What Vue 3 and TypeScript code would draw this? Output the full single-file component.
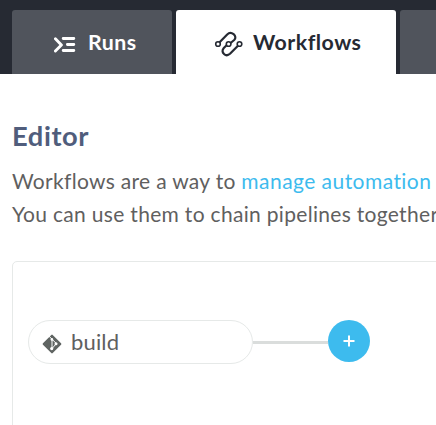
<script setup lang="ts">
interface Tab {
  label: string
  kind: 'runs' | 'workflows' | 'other'
  active: boolean
}

const tabs: Tab[] = [
  { label: 'Runs', kind: 'runs', active: false },
  { label: 'Workflows', kind: 'workflows', active: true },
  { label: '', kind: 'other', active: false },
]
const pipeline: string = 'build'
</script>

<template>
  <div class="page">
    <nav class="tabs">
      <div v-for="tab in tabs" :key="tab.kind" class="tab" :class="[tab.kind, { active: tab.active }]">
        <svg v-if="tab.kind === 'runs'" class="runs-icon" viewBox="0 0 22 16" width="22" height="16">
          <path d="M1.4 1.7 7.4 7.9 1.4 14M9.2 1.5H19.8M13.4 7.5H19.8M9.2 13.5H19.8" />
        </svg>
        <svg v-if="tab.kind === 'workflows'" class="flow-icon" viewBox="0 0 28 24" width="28" height="24">
          <path d="M4.6 10.2 12.2 2.4C14 .5 16.6.5 18.6 2.2S21 6.2 19.2 8L15.6 11M11.6 13.2 8.8 16C7 18 7.2 20.4 9 22S13.2 23.4 15 21.8L23 13.8" />
          <circle cx="3" cy="12" r="2.3" />
          <circle cx="13.6" cy="12" r="2.3" />
          <circle cx="24.5" cy="12" r="2.3" />
        </svg>
        <span>{{ tab.label }}</span>
      </div>
    </nav>
    <main class="content">
      <h1>Editor</h1>
      <p>Workflows are a way to <a>manage automation</a><br />You can use them to chain pipelines together</p>
      <section class="canvas">
        <div class="flow">
          <div class="step">
            <svg class="git-icon" viewBox="0 0 20 20" width="20" height="20">
              <rect class="diamond" x="3.1" y="3.1" width="13.8" height="13.8" rx="1" transform="rotate(45 10 10)" />
              <path class="branch" d="M7 2.2 10 5.2V15M10.4 5.6 14.2 9.4M14 10 10.4 14.2" />
              <circle cx="9.9" cy="5.4" r="1.3" />
              <circle cx="14" cy="9.7" r="1.5" />
              <circle cx="9.7" cy="14.6" r="1.6" />
            </svg>
            <span>{{ pipeline }}</span>
          </div>
          <div class="link"></div>
          <button class="add" type="button" aria-label="Add step">
            <svg viewBox="0 0 12 12" width="12" height="12"><path d="M6 .5V11.5M.5 6H11.5" /></svg>
          </button>
        </div>
      </section>
    </main>
  </div>
</template>

<style>
body {
  background: #fff;
  overflow: hidden;
}
</style>

<style scoped>
.page {
  width: 100%;
  height: 425px;
  overflow: hidden;
  font-family: Lato, "Liberation Sans", sans-serif;
  font-variant-ligatures: none;
  color: #5f6060;
}
.tabs {
  display: flex;
  gap: 4px;
  height: 74px;
  padding: 10px 0 0 12px;
  box-sizing: border-box;
  background: #262a33;
}
.tab {
  display: flex;
  flex: none;
  height: 64px;
  box-sizing: border-box;
  border-radius: 3px 3px 0 0;
  background: #50545c;
  color: #fff;
  font-size: 21.3px;
  font-weight: 700;
  letter-spacing: 0.5px;
  line-height: 64px;
}
.runs { width: 160px; padding-left: 41px; }
.workflows { width: 220px; padding-left: 39px; }
.other { width: 160px; }
.active {
  background: #fff;
  color: #262a33;
}
svg {
  display: block;
  flex: none;
  fill: none;
  stroke-linecap: round;
  stroke-linejoin: round;
}
.runs-icon {
  margin: 27px 12px 0 1px;
  stroke: #fff;
  stroke-width: 2.9;
}
.flow-icon {
  margin: 22px 10px 0 0;
  overflow: visible;
  stroke: #262a33;
  stroke-width: 2.2;
}
.flow-icon circle {
  fill: #fff;
  stroke-width: 1.6;
}
.content {
  padding: 45px 0 0 12px;
}
h1 {
  margin: 0;
  font-size: 27.3px;
  font-weight: 700;
  letter-spacing: 0.6px;
  line-height: 34px;
  color: #505d7c;
}
p {
  margin: 11px 0 0;
  font-size: 21px;
  letter-spacing: 0.31px;
  line-height: 33px;
  white-space: nowrap;
}
a {
  color: #3dbbee;
  letter-spacing: 0.45px;
}
.canvas {
  width: 600px;
  height: 300px;
  margin-top: 31px;
  padding: 58px 0 0 15px;
  box-sizing: border-box;
  border: 1px solid #e6e9e8;
  border-radius: 5px;
}
.flow {
  display: flex;
  align-items: flex-start;
}
.step {
  display: flex;
  align-items: center;
  width: 225px;
  height: 44px;
  padding-left: 13px;
  box-sizing: border-box;
  border: 1px solid #e6e9e8;
  border-radius: 22px;
  font-size: 22px;
  letter-spacing: 0.15px;
  line-height: 42px;
}
.git-icon { margin: 3px 9px 0 0; }
.diamond { fill: #5f6462; }
.branch {
  stroke: #fff;
  stroke-width: 1;
}
.git-icon circle { fill: #fff; }
.link {
  width: 75px;
  height: 3px;
  margin-top: 21px;
  background: #dadddc;
}
.add {
  display: grid;
  place-items: center;
  width: 42px;
  height: 42px;
  padding: 0;
  border: 0;
  border-radius: 50%;
  background: #3dbbee;
}
.add svg {
  stroke: #fff;
  stroke-width: 2;
  stroke-linecap: butt;
}
</style>
